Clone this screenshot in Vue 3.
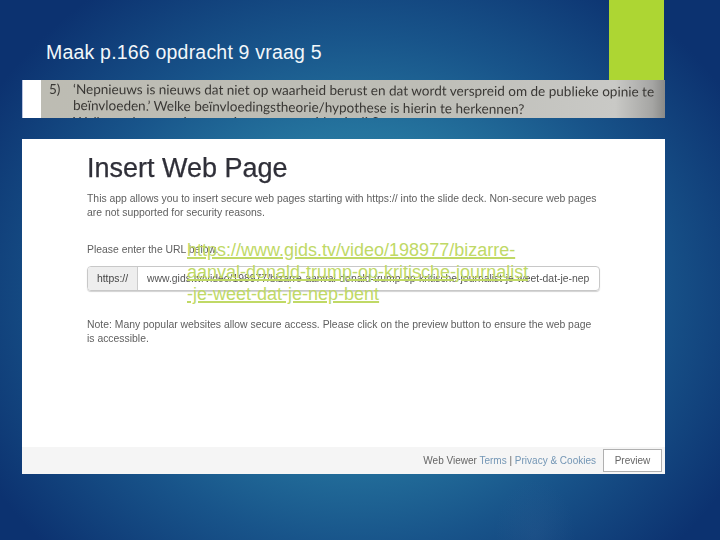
<script setup>
const introLines = [
  'This app allows you to insert secure web pages starting with https:// into the slide deck. Non-secure web pages',
  'are not supported for security reasons.',
]
const noteLines = [
  'Note: Many popular websites allow secure access. Please click on the preview button to ensure the web page',
  'is accessible.',
]
</script>

<template>
  <div class="slide">
    <div class="accent"></div>
    <h1 class="title">Maak p.166 opdracht 9 vraag 5</h1>

    <div class="photo">
      <div class="photo-margin"></div>
      <div class="photo-paper">
        <div class="q-row">
          <span class="q-num">5)</span>
          <div class="q-text">
            <p class="q-line first">‘Nepnieuws is nieuws dat niet op waarheid berust en dat wordt verspreid om de publieke opinie te</p>
            <p class="q-line second">beïnvloeden.’ Welke beïnvloedingstheorie/hypothese is hierin te herkennen?</p>
            <p class="q-line third">Welke andere manier van nieuws verspreiden is dit?</p>
          </div>
        </div>
      </div>
    </div>

    <div class="card">
      <div class="card-body">
        <h2 class="card-title">Insert Web Page</h2>
        <p class="copy intro"><span v-for="l in introLines" :key="l" class="ln">{{ l }}</span></p>
        <p class="copy label">Please enter the URL below.</p>
        <div class="url-box">
          <span class="prefix">https://</span>
          <span class="url">www.gids.tv/video/198977/bizarre-aanval-donald-trump-op-kritische-journalist-je-weet-dat-je-nep</span>
        </div>
        <p class="copy note"><span v-for="l in noteLines" :key="l" class="ln">{{ l }}</span></p>
      </div>
      <div class="card-foot">
        <span class="foot-text">Web Viewer <span class="foot-link">Terms</span> | <span class="foot-link">Privacy &amp; Cookies</span></span>
        <span class="preview">Preview</span>
      </div>
      <a class="link-over" href="#">https://www.gids.tv/video/198977/bizarre-<br>aanval-donald-trump-op-kritische-journalist<br>-je-weet-dat-je-nep-bent</a>
    </div>
  </div>
</template>

<style scoped>
.slide {
  position: relative;
  width: 720px;
  height: 540px;
  overflow: hidden;
  box-sizing: border-box;
  padding-left: 22px;
  font-family: "Liberation Sans", Arial, sans-serif;
  background:
    radial-gradient(ellipse 40px 55px at 535px 535px, rgba(70, 110, 160, 0.15), rgba(70, 110, 160, 0) 100%),
    radial-gradient(ellipse 430px 375px at 360px 290px, #2f8cae 0%, #25749e 42%, #18548a 68%, #0c3270 100%);
}
.accent {
  position: absolute;
  left: 609px;
  top: 0;
  width: 55px;
  height: 80px;
  background: #add633;
}
.title {
  margin: 0;
  padding: 41px 0 0 24px;
  height: 39px;
  box-sizing: content-box;
  font-size: 19.5px;
  line-height: 22px;
  font-weight: 400;
  color: #f2f7fa;
  letter-spacing: 0.2px;
}
.photo {
  display: flex;
  width: 643px;
  height: 38px;
  overflow: hidden;
}
.photo-margin {
  width: 19px;
  background: #fff;
  box-shadow: inset 1px 0 0 #b9c3e0;
  flex: none;
}
.photo-paper {
  flex: 1;
  background: linear-gradient(90deg, #bdbcb3 0%, #bdbdb6 60%, #c9c9c6 92%, #a5a5a3 98%, #8a8a88 100%);
  padding: 1px 0 0 8px;
  filter: blur(0.35px);
}
.q-row {
  display: flex;
  color: #3a3835;
  font-family: Lato, "Liberation Sans", sans-serif;
  font-size: 13.55px;
  line-height: 16px;
}
.q-num {
  width: 24px;
  flex: none;
}
.q-text {
  white-space: nowrap;
}
.q-line {
  margin: 0;
}
.q-line.first {
  transform: rotate(0.25deg);
  transform-origin: left center;
}
.q-line.second {
  transform: rotate(0.5deg);
  transform-origin: left center;
}
.q-line.third {
  margin-top: 1px;
}
.card {
  position: relative;
  width: 643px;
  height: 335px;
  margin-top: 21px;
  background: #fff;
  display: flex;
  flex-direction: column;
}
.card-body {
  flex: 1;
  padding: 13px 0 0 65px;
  filter: blur(0.35px);
}
.card-title {
  margin: 0;
  font-size: 27px;
  line-height: 32px;
  font-weight: 400;
  color: #2f2f38;
  -webkit-text-stroke: 0.25px #2f2f38;
}
.copy {
  margin: 0;
  font-size: 10.4px;
  line-height: 14px;
  color: #606060;
}
.ln {
  display: block;
  white-space: nowrap;
}
.intro {
  margin-top: 8px;
}
.label {
  margin-top: 23px;
  line-height: 13px;
}
.url-box {
  display: flex;
  align-items: center;
  width: 513px;
  height: 25px;
  margin-top: 10px;
  border: 1px solid #c8c8c8;
  border-radius: 4px;
  box-shadow: 0 1px 1px rgba(0, 0, 0, 0.18);
  box-sizing: border-box;
  font-size: 10.4px;
  color: #555;
  overflow: hidden;
  white-space: nowrap;
}
.prefix {
  flex: none;
  width: 50px;
  height: 100%;
  background: #eee;
  border-right: 1px solid #ccc;
  box-sizing: border-box;
  display: flex;
  align-items: center;
  justify-content: center;
  color: #444;
}
.url {
  padding-left: 9px;
}
.note {
  margin-top: 27px;
}
.card-foot {
  flex: none;
  height: 27px;
  background: #f5f5f5;
  display: flex;
  align-items: center;
  justify-content: flex-end;
  padding-right: 3px;
  font-size: 10px;
  color: #666;
  filter: blur(0.25px);
}
.foot-link {
  color: #7396b5;
}
.foot-text {
  margin-right: 7px;
}
.preview {
  width: 59px;
  height: 23px;
  box-sizing: border-box;
  border: 1.5px solid #b0b0b0;
  background: #fff;
  display: flex;
  align-items: center;
  justify-content: center;
}
.link-over {
  position: absolute;
  left: 165px;
  top: 100px;
  font-size: 18px;
  line-height: 22px;
  color: #c0d966;
  text-decoration: underline;
  text-decoration-thickness: 2px;
  white-space: nowrap;
}
</style>
